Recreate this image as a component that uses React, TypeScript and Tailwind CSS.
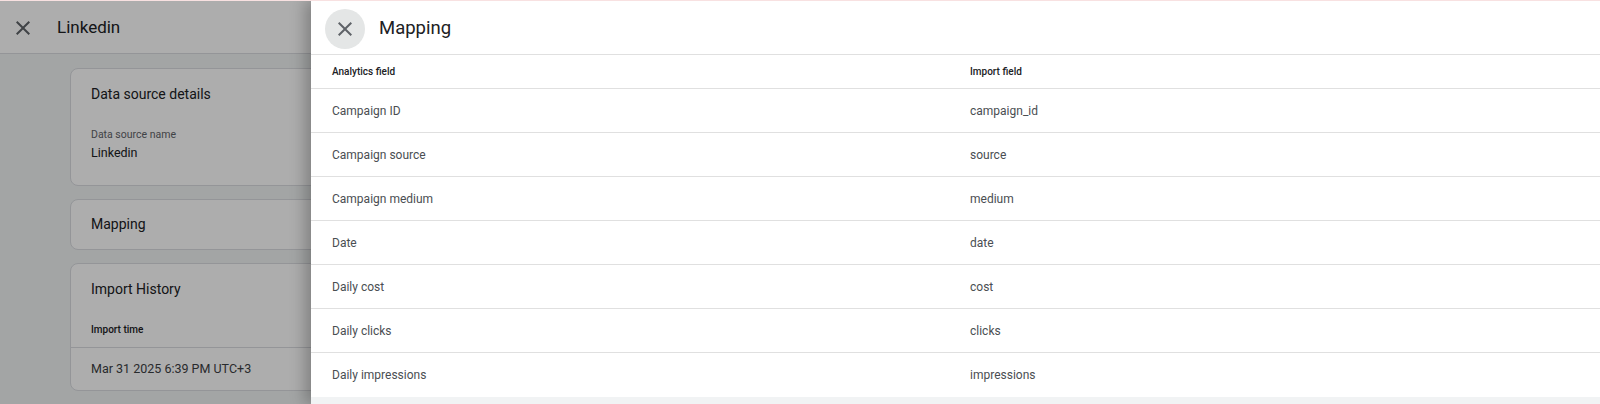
import React from "react";

interface MappingRow {
    analytics: string;
    imported: string;
}

const rows: MappingRow[] = [
    { analytics: "Campaign ID", imported: "campaign_id" },
    { analytics: "Campaign source", imported: "source" },
    { analytics: "Campaign medium", imported: "medium" },
    { analytics: "Date", imported: "date" },
    { analytics: "Daily cost", imported: "cost" },
    { analytics: "Daily clicks", imported: "clicks" },
    { analytics: "Daily impressions", imported: "impressions" },
];

function CloseIcon({ className }: { className?: string }) {
    return (
        <svg viewBox="0 0 24 24" className={className} fill="currentColor">
            <path d="M19 6.41 17.59 5 12 10.59 6.41 5 5 6.41 10.59 12 5 17.59 6.41 19 12 13.41 17.59 19 19 17.59 13.41 12z" />
        </svg>
    );
}

export default function App() {
    return (
        <div className="relative h-[404px] w-full overflow-hidden bg-[#f1f3f4] font-['Roboto',sans-serif]">
            {/* Page behind the drawer */}
            <div className="flex h-[54px] items-center border-b border-[#dadce0] bg-white pt-[2px]">
                <CloseIcon className="ml-[11px] h-6 w-6 text-[#5f6368]" />
                <span className="ml-[22px] text-[17px] text-[#202124]">Linkedin</span>
            </div>

            <div className="ml-[70px] flex w-[800px] flex-col gap-[13px] pt-[14px]">
                {/* Details */}
                <div className="rounded-lg border border-[#dadce0] bg-white px-5 pt-[13px] pb-[22px]">
                    <div className="text-[14px] leading-6 text-[#202124]">Data source details</div>
                    <div className="mt-[21px] text-[10.5px] leading-4 text-[#5f6368]">Data source name</div>
                    <div className="text-[12.5px] leading-5 text-[#202124]">Linkedin</div>
                </div>

                {/* Mapping */}
                <div className="rounded-lg border border-[#dadce0] bg-white px-5 pt-3 pb-[13px]">
                    <div className="text-[14px] leading-6 text-[#202124]">Mapping</div>
                </div>

                {/* Import history */}
                <div className="rounded-lg border border-[#dadce0] bg-white">
                    <div className="px-5 pt-[13px] text-[14px] leading-6 text-[#202124]">Import History</div>
                    <div className="mt-[21px] border-b border-[#dadce0] px-5 pb-[9px] text-[10px] font-medium leading-4 text-[#202124]">
                        Import time
                    </div>
                    <div className="flex h-[42px] items-center px-5 text-[12.5px] text-[#3c4043]">
                        Mar 31 2025 6:39 PM UTC+3
                    </div>
                </div>
            </div>

            {/* Scrim */}
            <div className="absolute inset-0 bg-black/[0.32]" />

            {/* Drawer */}
            <div className="absolute top-0 right-0 bottom-0 left-[311px] bg-[#f1f3f4] shadow-[-6px_0_14px_rgba(0,0,0,0.25)]">
                <div className="flex h-[55px] items-center border-b border-[#e0e0e0] bg-white pt-[3px]">
                    <button className="ml-[14px] flex h-10 w-10 items-center justify-center rounded-full bg-[#e4e6e6]">
                        <CloseIcon className="h-6 w-6 text-[#5f6368]" />
                    </button>
                    <span className="ml-[14px] text-[18.5px] text-[#202124]">Mapping</span>
                </div>

                <div className="bg-white">
                    <div className="flex h-[34px] items-center border-b border-[#e0e0e0] text-[10px] font-medium text-[#202124]">
                        <div className="w-[638px] pl-[21px]">Analytics field</div>
                        <div className="pl-[21px]">Import field</div>
                    </div>
                    {rows.map((row) => (
                        <div
                            key={row.analytics}
                            className="flex h-[44px] items-center border-b border-[#e0e0e0] text-[12px] text-[#4a4e52] last:border-b-0"
                        >
                            <div className="w-[638px] pl-[21px]">{row.analytics}</div>
                            <div className="pl-[21px]">{row.imported}</div>
                        </div>
                    ))}
                </div>
            </div>

            {/* Thin top accent */}
            <div className="absolute inset-x-0 top-0 h-px bg-[#f8e1e1]" />
        </div>
    );
}
